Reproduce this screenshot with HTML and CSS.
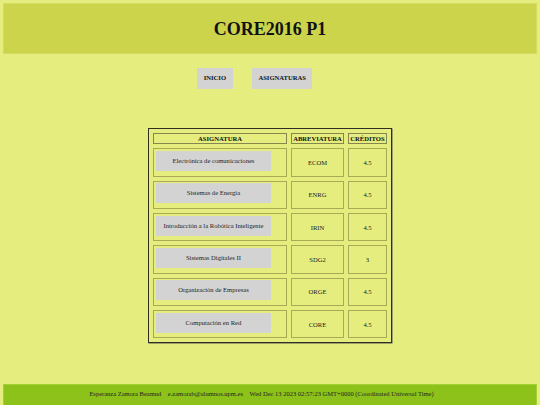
FILE: index.html
```html
<!DOCTYPE html>
<html lang="es">
<head>
<meta charset="utf-8">
<title>CORE2016 P1</title>
<link rel="stylesheet" href="styles.css">
</head>
<body>
<header class="top">
  <h1 class="title">CORE2016 P1</h1>
</header>
<nav class="menu">
  <a class="menu-btn" href="#">INICIO</a>
  <a class="menu-btn" href="#">ASIGNATURAS</a>
</nav>
<main class="content">
  <table class="subjects">
    <thead>
      <tr>
        <th class="c1">ASIGNATURA</th>
        <th class="c2">ABREVIATURA</th>
        <th class="c3">CRÉDITOS</th>
      </tr>
    </thead>
    <tbody>
      <tr><td class="name"><div class="name-box">Electrónica de comunicaciones</div></td><td>ECOM</td><td>4.5</td></tr>
      <tr><td class="name"><div class="name-box">Sistemas de Energía</div></td><td>ENRG</td><td>4.5</td></tr>
      <tr><td class="name"><div class="name-box">Introducción a la Robótica Inteligente</div></td><td>IRIN</td><td>4.5</td></tr>
      <tr><td class="name"><div class="name-box">Sistemas Digitales II</div></td><td>SDG2</td><td>3</td></tr>
      <tr><td class="name"><div class="name-box">Organización de Empresas</div></td><td>ORGE</td><td>4.5</td></tr>
      <tr><td class="name"><div class="name-box">Computación en Red</div></td><td>CORE</td><td>4.5</td></tr>
    </tbody>
  </table>
</main>
<footer class="bottom">
  <span class="foot-item">Esperanza Zamora Beamud</span>
  <span class="foot-item">e.zamorab@alumnos.upm.es</span>
  <span class="foot-item">Wed Dec 13 2023 02:57:23 GMT+0000 (Coordinated Universal Time)</span>
</footer>
</body>
</html>
```
FILE: styles.css
```css
html, body {
  margin: 0;
  padding: 0;
}
body {
  background: #e6ed7f;
  padding: 3px;
  font-family: "Liberation Serif", "Times New Roman", serif;
  color: #111;
  height: 405px;
  box-sizing: border-box;
  overflow: hidden;
}
.top {
  background: #ccd44b;
  border: 1px solid #d6dc62;
  height: 51px;
  box-sizing: border-box;
  display: flex;
  align-items: center;
  justify-content: center;
}
.title {
  margin: 0;
  font-size: 18px;
  font-weight: bold;
  line-height: 1;
}
.menu {
  margin-top: 14.3px;
  display: flex;
  justify-content: center;
  gap: 19.4px;
  padding-right: 30.4px;
}
.menu-btn {
  display: block;
  background: #d3d3d3;
  color: #111;
  text-decoration: none;
  font-weight: bold;
  font-size: 6.6px;
  height: 20.7px;
  line-height: 20.7px;
  padding: 0 6.5px;
}
.content {
  margin-top: 39px;
}
.subjects {
  margin: 0 auto;
  border: 1.5px solid #2e2e22;
  border-spacing: 4px;
  font-size: 6.6px;
  box-shadow: 0.5px 0.5px 0 #555;
}
.subjects th {
  height: 11.5px;
  box-sizing: border-box;
  padding: 0 1px;
  border: 1px solid #86864e;
  font-weight: bold;
  line-height: 9px;
  text-align: center;
}
.subjects th.c1 { width: 134px; box-sizing: border-box; }
.subjects th.c2 { width: 53px; box-sizing: border-box; }
.subjects th.c3 { width: 39px; box-sizing: border-box; }
.subjects td {
  height: 28.3px;
  box-sizing: border-box;
  border: 1px solid #aaa955;
  text-align: center;
  vertical-align: middle;
  padding: 0;
  color: #222;
}
.subjects td.name {
  vertical-align: top;
  padding: 1.7px;
  text-align: left;
}
.name-box {
  width: 115.5px;
  height: 20px;
  line-height: 19px;
  background: #d3d3d3;
  text-align: center;
  white-space: nowrap;
}
.bottom {
  margin-top: 40.5px;
  background: #8dc21a;
  border: 1px solid #a4d034;
  height: 30px;
  box-sizing: border-box;
  padding-top: 5.5px;
  text-align: center;
  font-size: 6.5px;
  color: #222;
  padding-right: 17px;
}
.foot-item {
  margin: 0 2.5px;
}
```
